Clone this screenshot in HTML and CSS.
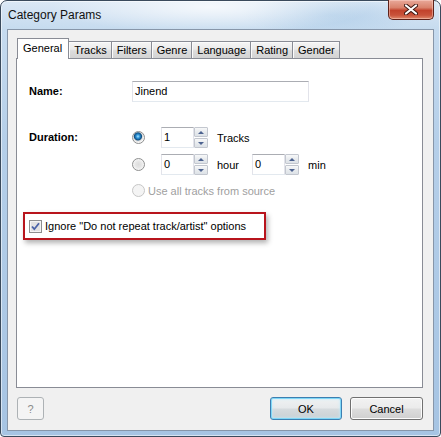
FILE: index.html
```html
<!DOCTYPE html>
<html lang="en">
<head>
    <meta charset="UTF-8">
    <title>Category Params</title>
    <link rel="stylesheet" href="styles.css">
</head>
<body>
    <div class="window">
        <div class="titlebar">
            <span class="title">Category Params</span>
            <button class="close" type="button">
                <svg width="14" height="11" viewBox="0 0 14 11">
                    <path d="M2 1.5 L12 9.5 M12 1.5 L2 9.5" stroke="#3b1510" stroke-width="4" stroke-linecap="round"/>
                    <path d="M2 1.5 L12 9.5 M12 1.5 L2 9.5" stroke="#fff" stroke-width="2.2" stroke-linecap="round"/>
                </svg>
            </button>
        </div>

        <div class="client">
            <!-- Tabs -->
            <div class="tabs">
                <div class="tab active">General</div>
                <div class="tab">Tracks</div>
                <div class="tab">Filters</div>
                <div class="tab">Genre</div>
                <div class="tab">Language</div>
                <div class="tab">Rating</div>
                <div class="tab">Gender</div>
            </div>

            <div class="panel">
                <div class="field">
                    <label class="field-label">Name:</label>
                    <div class="textbox name-box">Jinend</div>
                </div>

                <div class="field duration">
                    <label class="field-label">Duration:</label>
                    <div class="options">
                        <div class="option">
                            <span class="radio checked"></span>
                            <span class="spin">
                                <span class="textbox spin-value">1</span>
                                <span class="spin-btns">
                                    <span class="spin-btn up"></span>
                                    <span class="spin-btn down"></span>
                                </span>
                            </span>
                            <span class="unit">Tracks</span>
                        </div>
                        <div class="option">
                            <span class="radio"></span>
                            <span class="spin">
                                <span class="textbox spin-value">0</span>
                                <span class="spin-btns">
                                    <span class="spin-btn up"></span>
                                    <span class="spin-btn down"></span>
                                </span>
                            </span>
                            <span class="unit">hour</span>
                            <span class="spin">
                                <span class="textbox spin-value">0</span>
                                <span class="spin-btns">
                                    <span class="spin-btn up"></span>
                                    <span class="spin-btn down"></span>
                                </span>
                            </span>
                            <span class="unit">min</span>
                        </div>
                        <div class="option disabled">
                            <span class="radio"></span>
                            <span>Use all tracks from source</span>
                        </div>
                    </div>
                </div>

                <div class="highlight">
                    <span class="checkbox">
                        <svg width="13" height="13" viewBox="0 0 13 13">
                            <rect x="0.5" y="0.5" width="12" height="12" fill="#f4f4f4" stroke="#8e8f8f"/>
                            <rect x="2" y="2" width="9" height="9" fill="#e2e2e2"/>
                            <path d="M3 6.5 L5.3 9.2 L10 3.2" fill="none" stroke="#4a63a8" stroke-width="1.8"/>
                        </svg>
                    </span>
                    <span>Ignore "Do not repeat track/artist" options</span>
                </div>
            </div>

            <div class="footer">
                <button class="btn help" type="button">?</button>
                <span class="spacer"></span>
                <button class="btn default" type="button">OK</button>
                <button class="btn cancel" type="button">Cancel</button>
            </div>
        </div>
    </div>
</body>
</html>
```

FILE: styles.css
```css
body {
    margin: 0;
    background: #fff;
    font-family: "Liberation Sans", Arial, sans-serif;
    font-size: 11px;
    color: #000;
}

.window {
    box-sizing: border-box;
    width: 441px;
    height: 437px;
    display: flex;
    flex-direction: column;
    padding: 0 6px 5px 6px;
    border: 1px solid #3a4a5c;
    border-radius: 7px 7px 4px 4px;
    background:
        radial-gradient(ellipse 160px 26px at 210px 6px, rgba(255, 255, 255, 0.75), rgba(255, 255, 255, 0)),
        radial-gradient(ellipse 90px 20px at 330px 14px, rgba(150, 190, 225, 0.45), rgba(150, 190, 225, 0)),
        linear-gradient(180deg, #dbe8f5 0, #c6dbef 28px, #b5cfe9 140px, #a6c4e3 437px);
    box-shadow: inset 0 0 0 1px rgba(255, 255, 255, 0.55);
}

.titlebar {
    height: 28px;
    display: flex;
    justify-content: space-between;
    align-items: flex-start;
}

.title {
    padding: 7px 0 0 1px;
    font-size: 12px;
    line-height: 14px;
    color: #111;
}

.close {
    width: 46px;
    height: 20px;
    margin-top: -1px;
    padding: 0;
    display: flex;
    align-items: center;
    justify-content: center;
    border: 1px solid #5e2119;
    border-top: none;
    border-radius: 0 0 5px 5px;
    background: linear-gradient(180deg, #e9a99a 0%, #d9826c 40%, #c2422c 55%, #c9533b 80%, #e08a6c 100%);
    box-shadow: inset 0 0 0 1px rgba(255, 220, 210, 0.45);
}

.client {
    flex: 1;
    display: flex;
    flex-direction: column;
    border: 1px solid #8796a9;
    background: #f0f0f0;
}

/* Tabs */
.tabs {
    position: relative;
    z-index: 1;
    display: flex;
    align-items: flex-end;
    height: 21px;
    margin: 8px 0 -1px 9px;
}

.tab {
    box-sizing: border-box;
    height: 18px;
    padding: 0 4px 0 5px;
    line-height: 16px;
    border: 1px solid #898c95;
    border-left: none;
    background: linear-gradient(180deg, #f5f5f5 0%, #ebebeb 45%, #dcdcdc 55%, #d3d3d3 100%);
    box-shadow: inset 1px 1px 0 #fbfbfb;
}

.tab.active {
    height: 21px;
    padding: 3px 6px 0 5px;
    line-height: 13px;
    border-left: 1px solid #898c95;
    border-bottom: none;
    background: #fff;
    box-shadow: none;
}

.panel {
    flex: 1;
    margin: 0 10px 0 8px;
    padding: 22px 12px 0 12px;
    border: 1px solid #898c95;
    background: #fff;
}

.field {
    display: grid;
    grid-template-columns: 103px auto;
    align-items: start;
}

.field-label {
    font-weight: bold;
    height: 21px;
    line-height: 21px;
}

.textbox {
    box-sizing: border-box;
    height: 21px;
    padding: 0 2px;
    line-height: 19px;
    border: 1px solid #e2e3ea;
    border-top-color: #abadb3;
    border-bottom-color: #e3e9ef;
    background: #fff;
}

.name-box {
    width: 177px;
}

.duration {
    margin-top: 25px;
}

.options {
    display: flex;
    flex-direction: column;
    gap: 6px;
}

.option {
    display: flex;
    align-items: center;
    height: 21px;
}

.radio {
    box-sizing: border-box;
    width: 13px;
    height: 13px;
    margin-right: 16px;
    border: 1px solid #8e8f8f;
    border-radius: 50%;
    background: radial-gradient(circle at 50% 50%, #dcdcdc 0, #e6e6e6 3px, #f8f8f8 6px);
}

.radio.checked {
    background: radial-gradient(circle at 45% 40%, #a6e6ff 0, #2f93d8 1.8px, #0f4f82 3.6px, #8fa6b8 4.2px, #dcdcdc 4.6px, #f8f8f8 6px);
}

.option.disabled {
    height: 19px;
    color: #a0a0a0;
}

.option.disabled .radio {
    margin-right: 3px;
    border-color: #c6c6c6;
    background: #f4f4f4;
}

.spin {
    display: flex;
}

.spin-value {
    width: 33px;
}

.spin-btns {
    display: flex;
    flex-direction: column;
    gap: 1px;
}

.spin-btn {
    box-sizing: border-box;
    width: 14px;
    height: 10px;
    display: flex;
    align-items: center;
    justify-content: center;
    border: 1px solid #c3c7cf;
    border-radius: 1px;
    background: linear-gradient(180deg, #f7f8f9 0%, #e8ebee 50%, #dde2e7 100%);
}

.spin-btn::before {
    content: "";
    border-left: 3px solid transparent;
    border-right: 3px solid transparent;
}

.spin-btn.up::before {
    border-bottom: 3px solid #4d6390;
}

.spin-btn.down::before {
    border-top: 3px solid #4d6390;
}

.unit {
    margin: 0 13px 0 9px;
}

.highlight {
    box-sizing: border-box;
    width: 243px;
    height: 28px;
    margin: 12px 0 0 -6px;
    padding: 0 4px;
    display: flex;
    align-items: center;
    gap: 3px;
    border: 2px solid #b8141c;
    box-shadow: 2px 3px 5px rgba(0, 0, 0, 0.3);
}

.checkbox {
    display: flex;
}

/* Footer buttons */
.footer {
    display: flex;
    align-items: center;
    gap: 8px;
    margin: 9px 10px 10px 9px;
}

.spacer {
    flex: 1;
}

.btn {
    box-sizing: border-box;
    height: 23px;
    padding: 0;
    font-family: "Liberation Sans", Arial, sans-serif;
    font-size: 11px;
    color: #000;
    border: 1px solid #707070;
    border-radius: 3px;
    background: linear-gradient(180deg, #f2f2f2 0%, #ebebeb 48%, #dddddd 52%, #cfcfcf 100%);
    box-shadow: inset 0 0 0 1px #fcfcfc;
}

.btn.help {
    width: 27px;
    color: #8a8a8a;
    border-color: #adb2b5;
    background: #f4f4f4;
    box-shadow: none;
}

.btn.default {
    width: 72px;
    border-color: #3c7fb1;
    background: linear-gradient(180deg, #f0f2f3 0%, #e6e9eb 48%, #d6dbde 52%, #cad0d4 100%);
    box-shadow: inset 0 0 0 1px #7fd7f7, inset 0 0 3px 1px #c2ecfb;
}

.btn.cancel {
    width: 73px;
}
```
